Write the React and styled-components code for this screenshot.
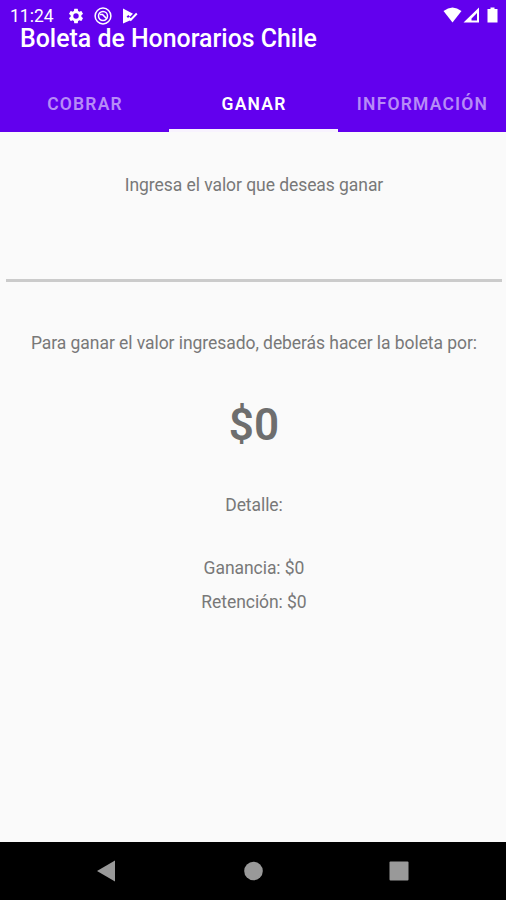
import styled, { createGlobalStyle } from "styled-components";

const GlobalStyle = createGlobalStyle`
	* {
		box-sizing: border-box;
	}

	body {
		margin: 0;
		font-family: Roboto, sans-serif;
		background-color: #fafafa;
	}
`;

const tabs = ["Cobrar", "Ganar", "Información"];

export default function App() {
	return (
		<>
			<GlobalStyle />
			<Screen>
				<Header>
					<StatusBar>
						<Clock>11:24</Clock>
						<LeftIcons>
							<svg width="18" height="18" viewBox="0 0 24 24" fill="#fff">
								<path d="M19.14 12.94c.04-.3.06-.61.06-.94s-.02-.64-.07-.94l2.03-1.58a.49.49 0 0 0 .12-.61l-1.92-3.32a.49.49 0 0 0-.59-.22l-2.39.96a7 7 0 0 0-1.62-.94l-.36-2.54A.48.48 0 0 0 13.92 2.4h-3.84a.47.47 0 0 0-.47.41l-.36 2.54a7.4 7.4 0 0 0-1.62.94l-2.39-.96a.47.47 0 0 0-.59.22L2.74 8.87a.47.47 0 0 0 .12.61l2.03 1.58a6.3 6.3 0 0 0 0 1.88l-2.03 1.58a.49.49 0 0 0-.12.61l1.92 3.32c.12.22.37.29.59.22l2.39-.96c.5.38 1.03.7 1.62.94l.36 2.54c.05.24.24.41.48.41h3.84c.24 0 .44-.17.47-.41l.36-2.54a7 7 0 0 0 1.62-.94l2.39.96c.22.08.47 0 .59-.22l1.92-3.32a.47.47 0 0 0-.12-.61zM12 15.6a3.6 3.6 0 1 1 0-7.2 3.6 3.6 0 0 1 0 7.2z" />
							</svg>
							<svg width="18" height="18" viewBox="0 0 18 18" fill="none" stroke="#fff">
								<circle cx="9" cy="9" r="7.9" strokeWidth="1.5" />
								<circle cx="9" cy="9" r="4.5" strokeWidth="1.5" />
								<path d="M6 7.5h2.5L13 12" strokeWidth="1.7" />
							</svg>
							<svg width="18" height="18" viewBox="0 0 18 18" fill="#fff">
								<path d="M2 1.5l10 5.2-3 3-1.700-1.700-1.800 1.800 4.500 3.200L2 16.500z" />
								<path d="M7.500 10.500l2.300 2.300 6-6.300" fill="none" stroke="#fff" strokeWidth="2" />
							</svg>
						</LeftIcons>
						<RightIcons>
							<svg width="56" height="18" viewBox="0 0 56 18" fill="#fff">
								<path d="M.5 4Q9.500-3 18.500 4L9.500 15.500z" />
								<path d="M36 .5v15H20.500zM34 6l-5.500 5.500v2h5.500z" fillRule="evenodd" />
								<path d="M44.500 2h3V.5h4V2h3v13.500h-10z" />
							</svg>
						</RightIcons>
					</StatusBar>
					<Title>Boleta de Honorarios Chile</Title>
					<Tabs>
						{tabs.map((tab) => (
							<Tab key={tab} $active={tab === "Ganar"}>
								{tab}
							</Tab>
						))}
					</Tabs>
				</Header>
				<Content>
					<Label>Ingresa el valor que deseas ganar</Label>
					<AmountInput aria-label="Valor" />
					<Label>Para ganar el valor ingresado, deberás hacer la boleta por:</Label>
					<Total>$0</Total>
					<Detail>
						<Label>Detalle:</Label>
						<Label>Ganancia: $0</Label>
						<Label>Retención: $0</Label>
					</Detail>
				</Content>
				<NavBar>
					<svg width="20" height="22" viewBox="0 0 20 22" fill="#999">
						<path d="M18 .5v21L0 11z" />
					</svg>
					<svg width="20" height="20" viewBox="0 0 20 20" fill="#999">
						<circle cx="10.5" cy="10" r="9.3" />
					</svg>
					<svg width="20" height="20" viewBox="0 0 20 20" fill="#999">
						<rect x="0.5" y="0.5" width="19" height="19" rx="1" />
					</svg>
				</NavBar>
			</Screen>
		</>
	);
}

const Screen = styled.div`
	height: 900px;
	display: flex;
	flex-direction: column;
`;

const Header = styled.header`
	height: 132px;
	background-color: #6200ee;
	color: #fff;
	display: flex;
	flex-direction: column;
`;

const StatusBar = styled.div`
	height: 24px;
	padding: 7px 7px 0 10px;
	display: flex;
	align-items: flex-start;
`;

const Clock = styled.span`
	width: 57px;
	font-size: 17.5px;
	line-height: 18px;
`;

const LeftIcons = styled.div`
	display: flex;
	gap: 9px;
`;

const RightIcons = styled.div`
	margin-left: auto;
`;

const Title = styled.h1`
	margin: 0;
	padding-left: 20px;
	height: 50px;
	font-size: 24.9px;
	font-weight: 500;
	line-height: 29px;
`;

const Tabs = styled.nav`
	height: 58px;
	display: grid;
	grid-template-columns: 169px 169px 1fr;
`;

const Tab = styled.div`
	display: flex;
	justify-content: center;
	align-items: center;
	padding: 5px 0 0 1px;
	font-size: 17.5px;
	font-weight: 600;
	letter-spacing: 1.2px;
	text-transform: uppercase;
	color: ${(props) => (props.$active ? "#fff" : "#b78bf7")};
	border-bottom: 3px solid ${(props) => (props.$active ? "#f8f3fe" : "transparent")};
`;

const Content = styled.main`
	flex: 1;
	padding: 42px 4px 0 6px;
	display: flex;
	flex-direction: column;
	align-items: center;
`;

const Label = styled.p`
	margin: 0;
	color: #787878;
	font-size: 17.5px;
	line-height: 22px;
	letter-spacing: -0.06px;
	white-space: nowrap;
`;

const AmountInput = styled.input`
	width: 100%;
	height: 46px;
	margin: 40px 0 50px;
	border: 0;
	border-bottom: 3px solid #cbcbcb;
	background: transparent;
	outline: none;
`;

const Total = styled.div`
	margin-top: 44px;
	color: #6e6e6e;
	font-size: 44px;
	font-weight: 600;
	line-height: 54px;
`;

const Detail = styled.section`
	margin-top: 42px;
	display: flex;
	flex-direction: column;
	align-items: center;
	gap: 12px;

	${Label}:first-child {
		margin-bottom: 29px;
	}
`;

const NavBar = styled.footer`
	height: 58px;
	padding: 0 97px;
	background-color: #000;
	display: flex;
	justify-content: space-between;
	align-items: center;
`;
